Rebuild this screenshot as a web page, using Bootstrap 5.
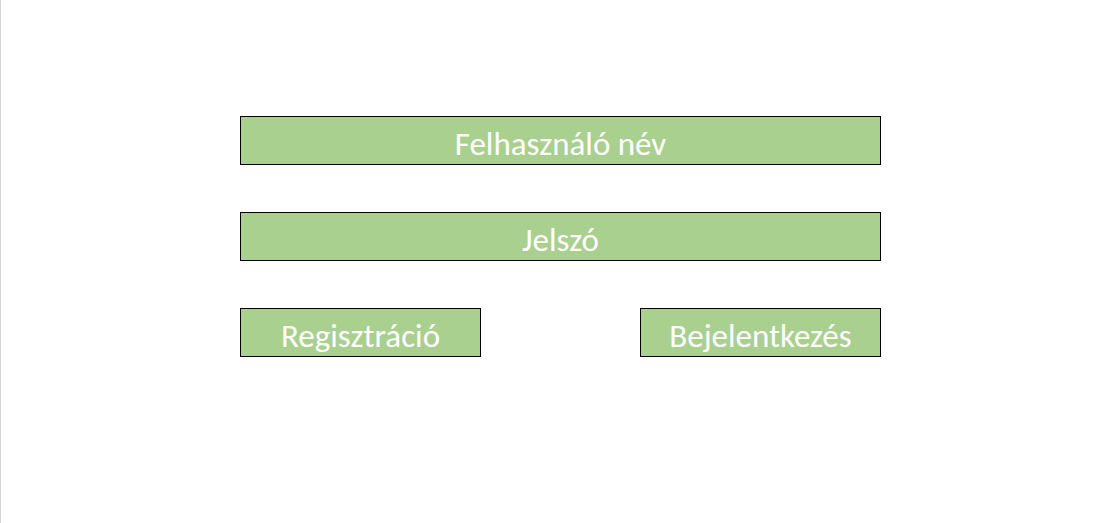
<!DOCTYPE html>
<html lang="hu">
<head>
<meta charset="utf-8">
<meta name="viewport" content="width=device-width, initial-scale=1">
<title>Bejelentkezés</title>
<link href="https://cdn.jsdelivr.net/npm/bootstrap@5.3.0/dist/css/bootstrap.min.css" rel="stylesheet">
<style>
body { font-family: Carlito, Calibri, Lato, sans-serif; }
.page { border-left: 1px solid #d4d4d4; padding-top: 116px; }
.login-form { width: 100%; max-width: 641px; }
.login-form .form-control, .login-form .btn {
  height: 49px; padding: 7px 0 0; border: 1px solid #000; border-radius: 0;
  background: #a9d08e; color: #fff; font-size: 33px; line-height: 40px; text-align: center;
}
.login-form .form-control::placeholder { color: #fff; opacity: 1; }
.login-form .btn { width: 241px; }
.stack { gap: 47px; }
</style>
</head>
<body>
<main class="page min-vh-100 d-flex justify-content-center align-items-start">
  <form class="login-form stack d-flex flex-column">
    <input class="form-control" type="text" name="user" placeholder="Felhasználó név" aria-label="Felhasználó név">
    <input class="form-control" type="password" name="password" placeholder="Jelszó" aria-label="Jelszó">
    <div class="d-flex justify-content-between">
      <button class="btn" type="button">Regisztráció</button>
      <button class="btn" type="submit">Bejelentkezés</button>
    </div>
  </form>
</main>
<script src="https://cdn.jsdelivr.net/npm/bootstrap@5.3.0/dist/js/bootstrap.bundle.min.js"></script>
</body>
</html>
